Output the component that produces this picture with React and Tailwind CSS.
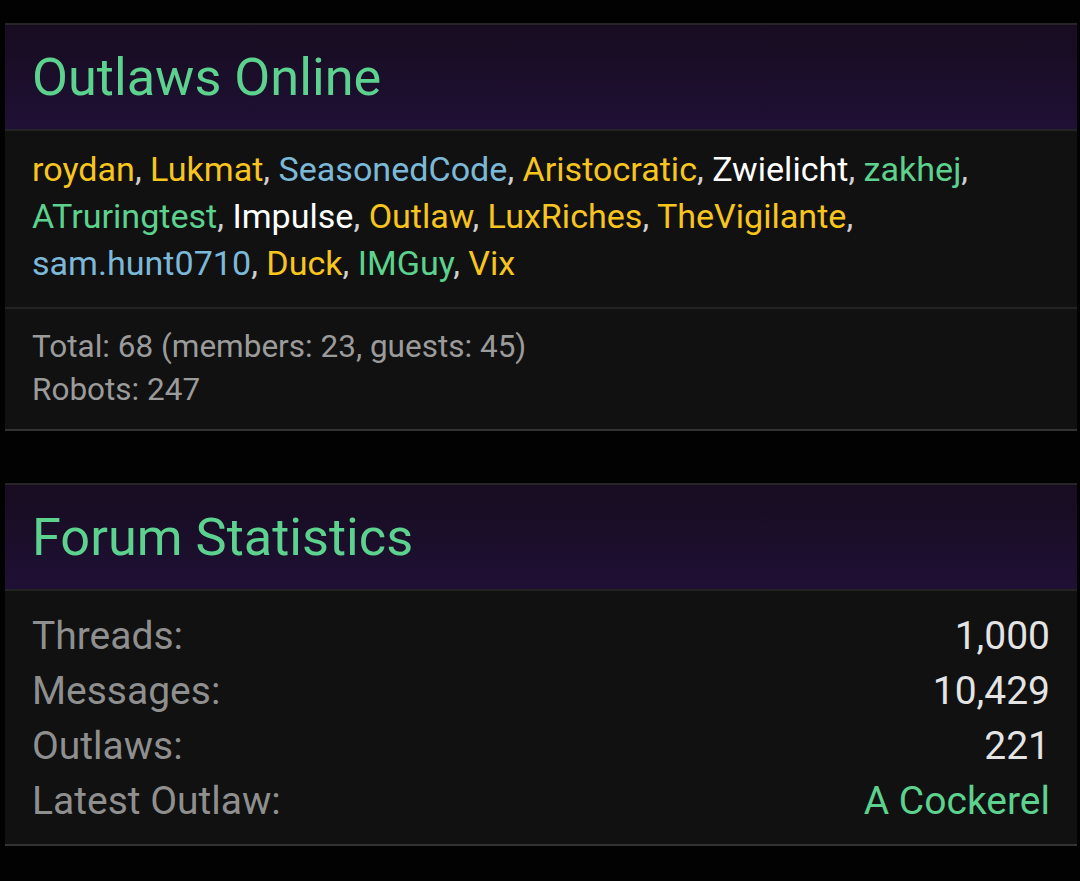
import React from 'react';

const online = [
  { name: 'roydan', color: 'text-[#f7c51e]' },
  { name: 'Lukmat', color: 'text-[#f7c51e]' },
  { name: 'SeasonedCode', color: 'text-[#7cb9d9]' },
  { name: 'Aristocratic', color: 'text-[#f7c51e]' },
  { name: 'Zwielicht', color: 'text-white' },
  { name: 'zakhej', color: 'text-[#5cd28e]' },
  { name: 'ATruringtest', color: 'text-[#5cd28e]' },
  { name: 'Impulse', color: 'text-white' },
  { name: 'Outlaw', color: 'text-[#f7c51e]' },
  { name: 'LuxRiches', color: 'text-[#f7c51e]' },
  { name: 'TheVigilante', color: 'text-[#f7c51e]' },
  { name: 'sam.hunt0710', color: 'text-[#7cb9d9]' },
  { name: 'Duck', color: 'text-[#f7c51e]' },
  { name: 'IMGuy', color: 'text-[#5cd28e]' },
  { name: 'Vix', color: 'text-[#f7c51e]' },
];

const stats = [
  { label: 'Threads:', value: '1,000' },
  { label: 'Messages:', value: '10,429' },
  { label: 'Outlaws:', value: '221' },
  { label: 'Latest Outlaw:', value: 'A Cockerel', link: true },
];

const PanelHeader = ({ title }) => (
  <div className="h-[106px] flex items-center px-[27px] border-t-2 border-[#262329] bg-gradient-to-b from-[#170c20] to-[#1f1035]">
    <h2 className="text-[52.3px] leading-none text-[#5cd28e]">{title}</h2>
  </div>
);

export default function App() {
  return (
    <div className="min-h-[881px] bg-[#020203] pt-[23px] pl-[5px] pr-[3px] font-['Roboto',sans-serif]">
      {/* Outlaws Online */}
      <section className="bg-[#111111] border-b-2 border-[#333333]">
        <PanelHeader title="Outlaws Online" />
        <div className="border-t-2 border-[#232323] px-[27px] pt-[15px] pb-[20px] text-[34.1px] leading-[47px] text-[#cfcfcf]">
          {online.map((u, i) => (
            <React.Fragment key={u.name}>
              <span className={u.color}>{u.name}</span>
              {i < online.length - 1 && ', '}
            </React.Fragment>
          ))}
        </div>
        <div className="border-t-2 border-[#232323] px-[27px] pt-[16px] pb-[18px] text-[31.5px] leading-[43px] text-[#9b9b9b]">
          <div>Total: 68 (members: 23, guests: 45)</div>
          <div>Robots: 247</div>
        </div>
      </section>

      <div className="h-[52px]" />

      {/* Forum Statistics */}
      <section className="bg-[#111111] border-b-2 border-[#333333]">
        <PanelHeader title="Forum Statistics" />
        <div className="border-t-2 border-[#232323] px-[27px] pt-[18px] pb-[15px] text-[39px] leading-[55px]">
          {stats.map((s) => (
            <div key={s.label} className="flex justify-between">
              <span className="text-[#8f8f8f]">{s.label}</span>
              <span className={s.link ? 'text-[#5cd28e]' : 'text-[#e4e4e4]'}>{s.value}</span>
            </div>
          ))}
        </div>
      </section>
    </div>
  );
}
